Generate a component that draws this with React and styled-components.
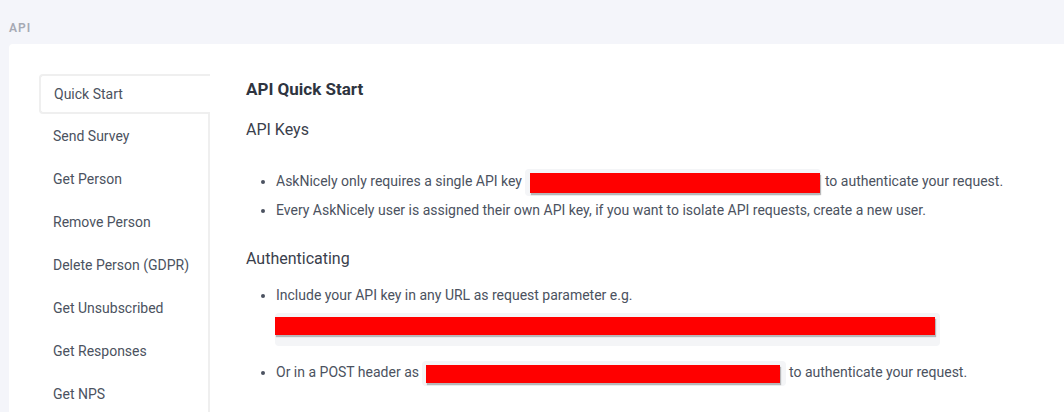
import React from 'react'
import styled, { createGlobalStyle } from 'styled-components'

const GlobalStyle = createGlobalStyle`
  body {
    margin: 0;
    background: #f4f5fa;
    font-family: Roboto, 'Liberation Sans', Arial, sans-serif;
    color: #4b5260;
  }
`

const Page = styled.div({
  paddingLeft: '9px',
  overflow: 'hidden',
  height: '412px',
})

const Crumb = styled.div({
  height: '44px',
  paddingTop: '21px',
  boxSizing: 'border-box',
  fontSize: '12px',
  fontWeight: '600',
  letterSpacing: '1px',
  color: '#a6aab4',
  lineHeight: '14px',
})

const Card = styled.div({
  display: 'flex',
  flexDirection: 'row',
  alignItems: 'flex-start',
  background: '#ffffff',
  borderTopLeftRadius: '4px',
  padding: '30px 0 0 30px',
  minHeight: '400px',
})

const Nav = styled.div({
  display: 'flex',
  flexDirection: 'column',
  width: '171px',
  flexShrink: '0',
})

const NavItem = styled.div(({ active }) => ({
  height: active ? '40px' : '43px',
  boxSizing: 'border-box',
  display: 'flex',
  alignItems: 'center',
  paddingLeft: active ? '13px' : '14px',
  paddingTop: active ? '0' : '1px',
  fontSize: '14px',
  color: '#4b5260',
  whiteSpace: 'nowrap',
  border: active ? '2px solid #efefef' : 'none',
  borderRight: active ? 'none' : '2px solid #efefef',
  borderRadius: active ? '4px 0 0 4px' : '0',
}))

const Content = styled.div({
  flex: '1',
  paddingLeft: '36px',
  paddingTop: '4px',
})

const Title = styled.h1({
  margin: '0',
  fontSize: '17px',
  lineHeight: '22px',
  fontWeight: '700',
  color: '#2e3440',
})

const Section = styled.h2(({ top }) => ({
  margin: `${top}px 0 0`,
  fontSize: '16px',
  lineHeight: '22px',
  fontWeight: '400',
  color: '#3a404c',
}))

const List = styled.ul(({ top }) => ({
  margin: `${top}px 0 0`,
  paddingLeft: '30px',
  fontSize: '14px',
  lineHeight: '29px',
  color: '#4b5260',
}))

const Item = styled.li(({ gap }) => ({
  marginTop: gap ? `${gap}px` : '0',
  '::marker': {
    color: '#555b66',
  },
}))

const Code = styled.span(({ pad }) => ({
  display: 'inline-block',
  verticalAlign: 'middle',
  background: '#f4f5f7',
  borderRadius: '4px',
  padding: `4px ${pad ? 6 : 1}px 3px ${pad ? 4 : 5}px`,
  marginLeft: pad ? '-1px' : '0',
  lineHeight: '0',
}))

const CodeBlock = styled.div({
  display: 'inline-block',
  marginLeft: '-1px',
  marginTop: '3px',
  background: '#f4f5f7',
  borderRadius: '4px',
  padding: '4px 5px 11px 0',
  lineHeight: '0',
})

const Redacted = styled.span(({ w, h }) => ({
  display: 'inline-block',
  width: `${w}px`,
  height: `${h}px`,
  background: '#ff0000',
  boxShadow: '1px 2px 1px rgba(0,0,0,0.25)',
}))

const navItems = [
  'Quick Start',
  'Send Survey',
  'Get Person',
  'Remove Person',
  'Delete Person (GDPR)',
  'Get Unsubscribed',
  'Get Responses',
  'Get NPS',
]

export default function App() {
  return (
    <Page>
      <GlobalStyle />
      <Crumb>API</Crumb>
      <Card>
        <Nav>
          {navItems.map((label, i) => (
            <NavItem key={label} active={i === 0}>
              {label}
            </NavItem>
          ))}
        </Nav>
        <Content>
          <Title>API Quick Start</Title>
          <Section top={19}>API Keys</Section>
          <List top={26}>
            <Item>
              AskNicely only requires a single API key{' '}
              <Code>
                <Redacted w={290} h={20} />
              </Code>{' '}
              to authenticate your request.
            </Item>
            <Item>
              Every AskNicely user is assigned their own API key, if you want to
              isolate API requests, create a new user.
            </Item>
          </List>
          <Section top={23}>Authenticating</Section>
          <List top={11}>
            <Item>
              Include your API key in any URL as request parameter e.g.
              <br />
              <CodeBlock>
                <Redacted w={660} h={18} />
              </CodeBlock>
            </Item>
            <Item gap={12}>
              Or in a POST header as{' '}
              <Code pad>
                <Redacted w={354} h={18} />
              </Code>{' '}
              to authenticate your request.
            </Item>
          </List>
        </Content>
      </Card>
    </Page>
  )
}
